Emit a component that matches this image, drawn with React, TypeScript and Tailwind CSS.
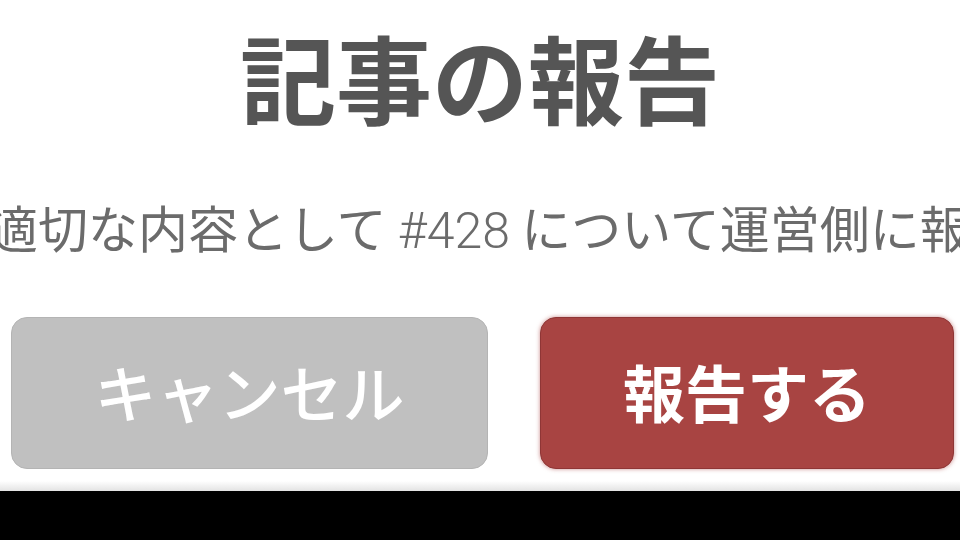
import React from 'react';

const jp = { fontFamily: '"Noto Sans CJK JP", "Noto Sans", sans-serif' };

export default function App() {
  return (
    <div className="w-[960px] h-[540px] flex flex-col overflow-hidden bg-black" style={jp}>
      {/* Dialog */}
      <div className="h-[481px] bg-white flex flex-col overflow-hidden">
        <h1 className="pt-[28px] text-center text-[96px] leading-[96px] font-bold text-[#555555]">
          記事の報告
        </h1>

        <p className="mt-[73px] -ml-[62px] whitespace-nowrap text-[50px] leading-[58px] text-[#6b6b6b]">
          不適切な内容として <span className="font-light" style={{ fontFamily: 'Roboto, "Noto Sans CJK JP", sans-serif' }}>#428</span> について運営側に報告しますか？
        </p>

        <div className="mt-[57px] flex gap-[52px] pl-[11px] pr-[6px]">
          <button className="w-[477px] h-[152px] rounded-[16px] bg-[#c0c0c0] border border-[#b4b4b4] text-white text-[62px] leading-none font-medium flex items-center justify-center pb-[4px]">
            キャンセル
          </button>
          <button className="w-[414px] h-[152px] rounded-[16px] bg-[#a84442] border border-[#8f3636] shadow-[0_0_4px_rgba(168,68,66,0.6)] text-white text-[62px] leading-none font-bold flex items-center justify-center pb-[4px]">
            報告する
          </button>
        </div>
      </div>
      <div className="h-[10px] bg-gradient-to-b from-white to-[#e3e3e3]" />
    </div>
  );
}
